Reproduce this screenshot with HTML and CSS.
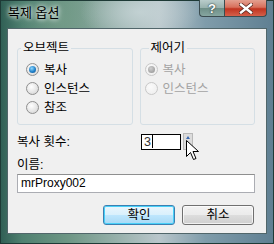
FILE: index.html
```html
<!DOCTYPE html>
<html lang="ko">
<head>
    <meta charset="UTF-8">
    <title>복제 옵션</title>
    <link rel="stylesheet" href="styles.css">
</head>
<body>
    <div class="window">
        <div class="titlebar">
            <span class="title">복제 옵션</span>
            <div class="caption-buttons">
                <span class="cap-btn help">?</span>
                <span class="cap-btn close">
                    <svg width="14" height="11" viewBox="0 0 14 11">
                        <path d="M2 1.5 L12 9.5 M12 1.5 L2 9.5" stroke="#5a2a22" stroke-width="4" stroke-linecap="square"/>
                        <path d="M2 1.5 L12 9.5 M12 1.5 L2 9.5" stroke="#fff" stroke-width="2.4" stroke-linecap="square"/>
                    </svg>
                </span>
            </div>
        </div>

        <div class="client">
            <div class="groups">
                <fieldset class="group group-left">
                    <legend>오브젝트</legend>
                    <div class="radio-row"><span class="radio checked"></span>복사</div>
                    <div class="radio-row"><span class="radio"></span>인스턴스</div>
                    <div class="radio-row"><span class="radio"></span>참조</div>
                </fieldset>
                <fieldset class="group group-right">
                    <legend>제어기</legend>
                    <div class="radio-row disabled"><span class="radio checked"></span>복사</div>
                    <div class="radio-row disabled"><span class="radio"></span>인스턴스</div>
                </fieldset>
            </div>

            <div class="copies-row">
                <span class="copies-label">복사 횟수:</span>
                <div class="spinner">
                    <span class="spin-value">3<span class="caret"></span></span>
                </div>
                <div class="spin-arrows">
                    <span class="spin-up"></span>
                    <span class="spin-down"></span>
                </div>
            </div>

            <div class="name-label">이름:</div>
            <div class="name-input">mrProxy002</div>

            <div class="buttons">
                <span class="btn default">확인</span>
                <span class="btn">취소</span>
            </div>
        </div>

        <svg class="cursor" width="14" height="21" viewBox="0 0 14 21">
            <path d="M0.5 0.5 L0.5 16.5 L4.5 12.5 L7.5 19.5 L10 18.5 L7 11.5 L12.5 11.5 Z" fill="#fff" stroke="#000" stroke-width="1"/>
        </svg>
    </div>
</body>
</html>
```

FILE: styles.css
```css
body {
    margin: 0;
    font-family: "Liberation Sans", "Noto Sans CJK KR", sans-serif;
    font-size: 12.5px;
    color: #000;
}
.window {
    position: relative;
    width: 274px;
    height: 244px;
    overflow: hidden;
    background:
        radial-gradient(ellipse 60px 30px at 140px 12px, rgba(200, 214, 216, 0.8), rgba(200, 214, 216, 0)),
        radial-gradient(ellipse 40px 40px at 60px 20px, rgba(120, 160, 140, 0.6), rgba(120, 160, 140, 0)),
        linear-gradient(to right, #2f5e54 0%, #4f8070 8%, #6e9685 25%, #a3b8b6 48%, #b9c6cb 58%, #7f9caa 75%, #5f7f92 100%);
    box-shadow: inset 0 0 0 1px #1e3a36;
}
.titlebar {
    height: 28px;
    display: flex;
    justify-content: space-between;
    align-items: flex-start;
    padding-left: 8px;
    box-sizing: border-box;
}
.title {
    margin-top: 6px;
    font-size: 13px;
    line-height: 14px;
    color: #000;
    text-shadow: 0 0 4px #fff, 0 0 6px rgba(255, 255, 255, 0.8);
}
.caption-buttons {
    display: flex;
    margin-right: 7px;
}
.cap-btn {
    height: 17px;
    display: flex;
    align-items: center;
    justify-content: center;
    box-sizing: border-box;
    border: 1px solid #3b4c50;
    border-top: none;
}
.help {
    width: 25px;
    border-radius: 0 0 0 4px;
    border-right: none;
    background: linear-gradient(to bottom, #b9cccb 0%, #98b2ae 48%, #6e8f88 52%, #86a6a0 100%);
    color: #fff;
    font-weight: bold;
    font-size: 13px;
    text-shadow: 0 0 2px #2a3c3c, 0 0 1px #2a3c3c;
}
.close {
    width: 43px;
    border-radius: 0 0 4px 0;
    background: linear-gradient(to bottom, #e3a090 0%, #d8705c 45%, #c13420 55%, #d4604a 100%);
}
.client {
    margin: 0 7px;
    height: 206px;
    box-sizing: border-box;
    background: #f0f0f0;
    border: 1px solid #51666a;
    padding: 0 11px 0 9px;
}
.groups {
    display: flex;
    gap: 7px;
    margin-top: 12px;
}
.group {
    margin: 0;
    width: 117px;
    height: 84px;
    box-sizing: border-box;
    border: 1px solid #d5dfe5;
    border-radius: 3px;
    padding: 5px 0 0 3px;
    min-width: 0;
}
.group legend {
    padding: 0 2px;
    line-height: 14px;
}
.group-left .radio-row {
    padding-left: 5px;
}
.group-right legend {
    margin-left: 5px;
}
.group-right .radio-row {
    padding-left: 1px;
}
.radio-row {
    display: flex;
    align-items: center;
    height: 19px;
    line-height: 14px;
}
.radio {
    width: 11px;
    height: 11px;
    border-radius: 50%;
    border: 1px solid #8f8f8f;
    background: radial-gradient(circle at 40% 35%, #fff 0%, #e8e8e8 50%, #cfcfcf 100%);
    margin-right: 5px;
    flex-shrink: 0;
    position: relative;
}
.radio.checked::after {
    content: "";
    position: absolute;
    left: 2px;
    top: 2px;
    width: 7px;
    height: 7px;
    border-radius: 50%;
    background: radial-gradient(circle at 40% 35%, #8fd8ff 0%, #1f7fc8 55%, #0c4f8a 100%);
}
.disabled {
    color: #a3a3a3;
}
.disabled .radio {
    border-color: #c8c8c8;
    background: radial-gradient(circle at 40% 35%, #fafafa 0%, #ececec 100%);
}
.disabled .radio.checked::after {
    background: radial-gradient(circle at 40% 35%, #d0d0d0 0%, #a8a8a8 60%, #909090 100%);
}
.copies-row {
    display: flex;
    align-items: center;
    height: 17px;
    margin-top: 8px;
}
.copies-label {
    width: 124px;
    line-height: 14px;
}
.spinner {
    width: 40px;
    height: 16px;
    box-sizing: border-box;
    border: 1px solid #000;
    background: #fff;
    display: flex;
    align-items: center;
    padding-left: 2px;
}
.spin-value {
    display: flex;
    align-items: center;
    line-height: 14px;
    color: #333;
}
.caret {
    width: 1px;
    height: 13px;
    background: #000;
    margin-left: 1px;
}
.spin-arrows {
    margin-left: 2px;
    width: 10px;
    height: 17px;
    display: flex;
    flex-direction: column;
    background: #dcdcdc;
    border: 1px solid #b9b9b9;
    box-sizing: border-box;
}
.spin-up, .spin-down {
    flex: 1;
    position: relative;
}
.spin-up::after {
    content: "";
    position: absolute;
    left: 2px;
    top: 2px;
    border-left: 2px solid transparent;
    border-right: 2px solid transparent;
    border-bottom: 3px solid #3d6ab0;
}
.spin-down::after {
    content: "";
    position: absolute;
    left: 2px;
    top: 2px;
    border-left: 2px solid transparent;
    border-right: 2px solid transparent;
    border-top: 3px solid #7a8aa0;
}
.name-label {
    margin-top: 8px;
    line-height: 14px;
}
.name-input {
    margin-top: 2px;
    height: 19px;
    box-sizing: border-box;
    border: 1px solid #abadb3;
    border-top-color: #8e8f8f;
    background: #fff;
    padding-left: 3px;
    line-height: 16px;
    font-size: 12px;
    color: #000;
}
.buttons {
    display: flex;
    justify-content: flex-end;
    gap: 7px;
    margin-top: 12px;
    margin-right: 1px;
}
.btn {
    width: 72px;
    height: 20px;
    box-sizing: border-box;
    border: 1px solid #707070;
    border-radius: 3px;
    background: linear-gradient(to bottom, #f2f2f2 0%, #ebebeb 49%, #dddddd 51%, #cfcfcf 100%);
    display: flex;
    align-items: center;
    justify-content: center;
    line-height: 14px;
    box-shadow: inset 0 0 0 1px rgba(255, 255, 255, 0.7);
}
.btn.default {
    border-color: #3c7fb1;
    background: linear-gradient(to bottom, #eaf6fd 0%, #d9f0fc 49%, #bee6fd 51%, #a7d9f5 100%);
    box-shadow: inset 0 0 0 1px #48d0f8;
}
.cursor {
    position: absolute;
    left: 186px;
    top: 140px;
}
```
